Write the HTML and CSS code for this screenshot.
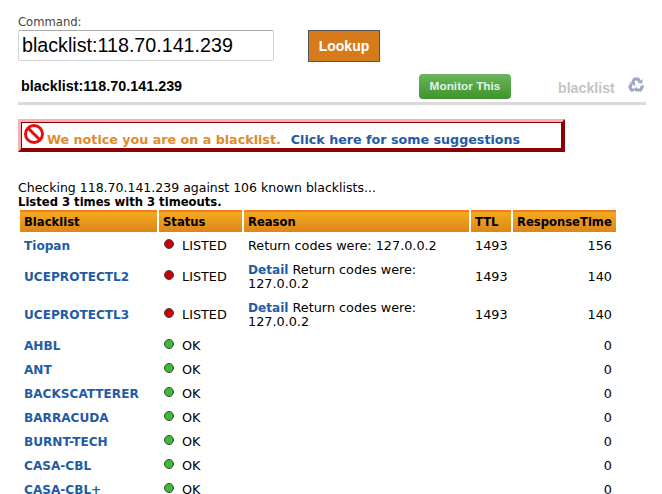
FILE: index.html
```html
<!DOCTYPE html>
<html lang="en">
<head>
    <meta charset="UTF-8">
    <title>Blacklist check</title>
    <link rel="stylesheet" href="styles.css">
</head>
<body>
    <div class="lookup">
        <div class="command">
            <label class="command-label" for="command">Command:</label>
            <input class="command-input" id="command" type="text" value="blacklist:118.70.141.239">
        </div>
        <button class="lookup-btn">Lookup</button>
    </div>

    <div class="result-head">
        <span class="result-title">blacklist:118.70.141.239</span>
        <a class="monitor-btn" href="#">Monitor This</a>
        <span class="result-type">blacklist</span>
        <svg class="recycle" width="16" height="15" viewBox="0 0 16 15">
            <g fill="none" stroke="#9aa5c9" stroke-width="3">
                <path d="M4.500 5.500L6.500 2H10l1.500 2.500"/>
                <path d="M3.500 7L1.800 10l1.700 3H6"/>
                <path d="M8.500 13H12.500L14.300 10 13.500 8.500"/>
            </g>
            <g fill="#9aa5c9">
                <path d="M9.500 6l4.500 0.500 1-4.500z"/>
                <path d="M1 5.500l5.500-.5 1 4z"/>
                <path d="M9 9.500v5.500l-3.500-2.500z"/>
            </g>
        </svg>
    </div>

    <div class="notice">
        <svg class="notice-icon" width="22" height="22" viewBox="0 0 22 22">
            <circle cx="11" cy="11" r="8.500" fill="#fff" stroke="#e01010" stroke-width="3"/>
            <path d="M5 5l12 12" stroke="#e01010" stroke-width="3"/>
        </svg>
        <span class="notice-text">We notice you are on a blacklist.</span>
        <a class="notice-link" href="#">Click here for some suggestions</a>
    </div>

    <p class="summary">Checking 118.70.141.239 against 106 known blacklists...<br><b>Listed 3 times with 3 timeouts.</b></p>

    <table class="results">
        <thead>
            <tr>
                <th class="col-name">Blacklist</th>
                <th class="col-status">Status</th>
                <th class="col-reason">Reason</th>
                <th class="col-ttl">TTL</th>
                <th class="col-time">ResponseTime</th>
            </tr>
        </thead>
        <tbody>
            <tr class="row-one">
                <td><a href="#">Tiopan</a></td>
                <td><span class="dot dot-red"></span>LISTED</td>
                <td>Return codes were: 127.0.0.2</td>
                <td>1493</td>
                <td class="num">156</td>
            </tr>
            <tr class="row-two">
                <td><a href="#">UCEPROTECTL2</a></td>
                <td><span class="dot dot-red"></span>LISTED</td>
                <td><a href="#">Detail</a> Return codes were: 127.0.0.2</td>
                <td>1493</td>
                <td class="num">140</td>
            </tr>
            <tr class="row-two">
                <td><a href="#">UCEPROTECTL3</a></td>
                <td><span class="dot dot-red"></span>LISTED</td>
                <td><a href="#">Detail</a> Return codes were: 127.0.0.2</td>
                <td>1493</td>
                <td class="num">140</td>
            </tr>
            <tr>
                <td><a href="#">AHBL</a></td>
                <td><span class="dot dot-green"></span>OK</td>
                <td></td>
                <td></td>
                <td class="num">0</td>
            </tr>
            <tr>
                <td><a href="#">ANT</a></td>
                <td><span class="dot dot-green"></span>OK</td>
                <td></td>
                <td></td>
                <td class="num">0</td>
            </tr>
            <tr>
                <td><a href="#">BACKSCATTERER</a></td>
                <td><span class="dot dot-green"></span>OK</td>
                <td></td>
                <td></td>
                <td class="num">0</td>
            </tr>
            <tr>
                <td><a href="#">BARRACUDA</a></td>
                <td><span class="dot dot-green"></span>OK</td>
                <td></td>
                <td></td>
                <td class="num">0</td>
            </tr>
            <tr>
                <td><a href="#">BURNT-TECH</a></td>
                <td><span class="dot dot-green"></span>OK</td>
                <td></td>
                <td></td>
                <td class="num">0</td>
            </tr>
            <tr>
                <td><a href="#">CASA-CBL</a></td>
                <td><span class="dot dot-green"></span>OK</td>
                <td></td>
                <td></td>
                <td class="num">0</td>
            </tr>
            <tr>
                <td><a href="#">CASA-CBL+</a></td>
                <td><span class="dot dot-green"></span>OK</td>
                <td></td>
                <td></td>
                <td class="num">0</td>
            </tr>
        </tbody>
    </table>
</body>
</html>
```

FILE: styles.css
```css
html, body {
    height: 100%;
    overflow: hidden;
}

body {
    margin: 0;
    padding: 14px 16px 0 18px;
    box-sizing: border-box;
    background: #fff;
    color: #000;
    font-family: "DejaVu Sans", sans-serif;
    font-size: 12px;
}

a {
    text-decoration: none;
    color: #1f5ca5;
}

.lookup {
    display: flex;
    align-items: flex-end;
    gap: 34px;
}

.command {
    display: flex;
    flex-direction: column;
}

.command-label {
    font-size: 11.6px;
    line-height: 16px;
    color: #444;
}

.command-input {
    width: 256px;
    height: 31px;
    box-sizing: border-box;
    padding: 0 3px;
    border: 1px solid #d4d4dc;
    border-top-color: #aaa;
    border-radius: 2px;
    font-family: "Liberation Sans", sans-serif;
    font-size: 19.7px;
    color: #000;
}

.lookup-btn {
    width: 72px;
    height: 32px;
    margin-bottom: -1px;
    padding: 0;
    border: 1px solid #555;
    background: #d67b1c;
    color: #fff;
    font-family: "Liberation Sans", sans-serif;
    font-size: 14px;
    font-weight: bold;
}

.result-head {
    display: flex;
    align-items: center;
    height: 28px;
    margin-top: 11px;
    padding-bottom: 2px;
    border-bottom: 3px solid #dadada;
    font-family: "Liberation Sans", sans-serif;
    font-weight: bold;
}

.result-title {
    margin-left: 3px;
    font-size: 14.35px;
    width: 398px;
}

.monitor-btn {
    width: 92px;
    height: 25px;
    line-height: 25px;
    border-radius: 4px;
    background: linear-gradient(#6bb55c, #3f932c);
    color: #dff5e8;
    text-align: center;
    font-size: 11.8px;
}

.result-type {
    margin-left: 47px;
    margin-top: 4px;
    font-size: 14.2px;
    color: #c4c4c4;
}

.recycle {
    margin-left: 13px;
    margin-top: -4px;
}

.notice {
    display: flex;
    align-items: center;
    width: 547px;
    height: 33px;
    box-sizing: border-box;
    margin-top: 14px;
    border: 3px solid;
    border-color: #f8b0b0 #8b0000 #8b0000 #f8b0b0;
    outline: 1px solid #8b0000;
    outline-offset: -4px;
    padding-left: 2px;
    font-size: 12.7px;
    font-weight: bold;
}

.notice-icon {
    margin-top: -3px;
}

.notice-text {
    margin-left: 2px;
    padding-top: 7px;
    color: #e08a2c;
}

.notice-link {
    margin-left: 10px;
    padding-top: 7px;
}

.summary {
    margin: 29px 0 0;
    font-size: 12.5px;
    line-height: 14px;
}

.summary b {
    font-size: 11.6px;
}

.results {
    width: 600px;
    margin: -1px 0 0;
    border-spacing: 2px;
    table-layout: fixed;
}

.results th {
    height: 20px;
    padding: 0 4px;
    border-top: 2px solid #f07f22;
    background: linear-gradient(#f5a91f, #dd8619);
    text-align: left;
    font-size: 11.6px;
    font-weight: bold;
}

.col-name { width: 129px; }
.col-status { width: 75px; }
.col-reason { width: 217px; }
.col-ttl { width: 32px; }
.col-time { width: 95px; }

.results td {
    height: 22px;
    padding: 0 4px;
    vertical-align: middle;
    font-size: 12.8px;
    line-height: 14px;
}

.results td a {
    font-size: 12.1px;
    font-weight: bold;
}

.results .row-two td {
    height: 36px;
}

.results .row-one td {
    height: 23px;
}

.results td.num {
    text-align: right;
}

.dot {
    display: inline-block;
    width: 8px;
    height: 8px;
    margin: 0 8px 0 1px;
    border: 1px solid #444;
    border-radius: 50%;
    position: relative;
    top: -1px;
}

.dot-red { background: #c8000c; }
.dot-green { background: #35bb35; }
```
